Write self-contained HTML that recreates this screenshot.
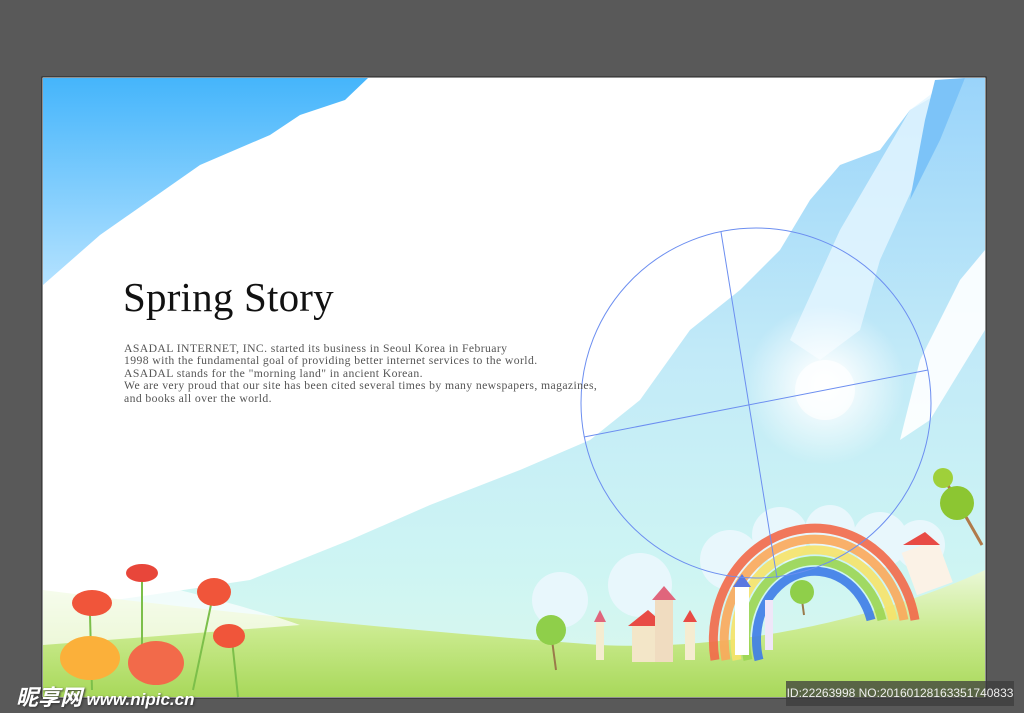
<!DOCTYPE html>
<html><head><meta charset="utf-8"><style>
html,body{margin:0;padding:0;background:#595959;width:1024px;height:713px;overflow:hidden;font-family:"Liberation Serif",serif}
svg{position:absolute;left:0;top:0}
.t{position:absolute;left:123px;top:273px;font-size:41px;color:#111;font-family:"Liberation Serif",serif;letter-spacing:0.2px}
.p{position:absolute;left:124px;top:343px;font-size:11.7px;line-height:12.4px;color:#555;white-space:nowrap;letter-spacing:0.4px}
.wm{position:absolute;left:16px;top:680px;color:#fff;font-family:"Liberation Sans","Noto Sans CJK SC",sans-serif;font-weight:bold;font-style:italic;text-shadow:1px 1px 2px #333}
.id{position:absolute;left:786px;top:681px;width:228px;height:25px;background:rgba(60,60,60,0.75);color:#eee;font-family:"Liberation Sans",sans-serif;font-size:12px;line-height:25px;text-align:center}
</style></head><body>
<svg width="1024" height="713" viewBox="0 0 1024 713">
<defs>
<linearGradient id="tl" x1="0" y1="0" x2="0" y2="1"><stop offset="0" stop-color="#45b5fb"/><stop offset="1" stop-color="#b4e2ff"/></linearGradient>
<linearGradient id="sky" x1="0" y1="0" x2="0" y2="1"><stop offset="0" stop-color="#9ad4fa"/><stop offset="0.45" stop-color="#c2eaf8"/><stop offset="0.8" stop-color="#cef5f3"/><stop offset="1" stop-color="#dcf8ec"/></linearGradient>
<linearGradient id="gr" x1="0" y1="0" x2="0" y2="1"><stop offset="0" stop-color="#eaf8d8"/><stop offset="0.5" stop-color="#c9ea8c"/><stop offset="1" stop-color="#a8d85a"/></linearGradient>
<radialGradient id="sun"><stop offset="0" stop-color="#fff" stop-opacity="1"/><stop offset="0.3" stop-color="#fff" stop-opacity="0.8"/><stop offset="1" stop-color="#fff" stop-opacity="0"/></radialGradient>
</defs>
<rect x="42" y="77" width="944" height="621" fill="#fff" stroke="#222" stroke-width="1"/>
<polygon points="43,78 368,78 345,100 300,115 270,135 200,165 150,200 100,235 43,285" fill="url(#tl)"/>
<polygon points="965,78 985,78 985,697 43,697 43,610 150,595 250,580 350,540 430,505 520,470 590,440 640,400 690,330 740,290 780,250 810,200 840,165 880,150 910,110" fill="url(#sky)"/>
<polygon points="910,110 950,80 965,78 930,150 880,260 860,330 820,360 790,340 840,230" fill="#e6f6ff" opacity="0.8"/>
<polygon points="935,80 965,78 940,140 910,200 925,120" fill="#7cc3f8"/>
<polygon points="985,250 985,330 930,420 900,440 920,360 960,280" fill="#fff" opacity="0.9"/>
<circle cx="825" cy="385" r="80" fill="url(#sun)"/>
<circle cx="825" cy="390" r="30" fill="#fff" opacity="0.7"/>
<g fill="#e8f7fc">
<circle cx="730" cy="560" r="30"/><circle cx="780" cy="535" r="28"/><circle cx="830" cy="530" r="25"/><circle cx="880" cy="540" r="28"/><circle cx="920" cy="545" r="25"/><circle cx="560" cy="600" r="28"/><circle cx="640" cy="585" r="32"/>
</g>
<path d="M43,590 C200,610 400,630 600,645 C750,652 900,610 985,570 L985,697 L43,697 Z" fill="url(#gr)"/>
<path d="M43,560 C120,575 230,600 300,625 L43,645Z" fill="#fff" opacity="0.7"/>
<g fill="none" stroke-width="9" opacity="0.9">
<path d="M715,660 A100,110 0 0 1 915,620" stroke="#f36a4a"/>
<path d="M726,660 A90,100 0 0 1 904,620" stroke="#fba95b"/>
<path d="M737,660 A79,89 0 0 1 893,620" stroke="#f7e46a"/>
<path d="M748,660 A68,78 0 0 1 882,620" stroke="#9cd653"/>
<path d="M759,660 A57,67 0 0 1 871,620" stroke="#3e7de8"/>
</g>
<g>
<rect x="632" y="622" width="30" height="40" fill="#f3e6c8"/><polygon points="628,626 648,610 666,626" fill="#e84b45"/>
<rect x="655" y="598" width="18" height="64" fill="#f0dcc0"/><polygon points="652,600 664,586 676,600" fill="#e0657c"/>
<rect x="685" y="620" width="10" height="40" fill="#f5ecd0"/><polygon points="683,622 690,610 697,622" fill="#e84b45"/>
<rect x="596" y="620" width="8" height="40" fill="#f5ecd0"/><polygon points="594,622 600,610 606,622" fill="#e0657c"/>
<rect x="735" y="585" width="14" height="70" fill="#fff"/><polygon points="733,587 742,574 751,587" fill="#5a78e0"/>
<rect x="765" y="600" width="8" height="50" fill="#f0e6f8"/>
<rect x="908" y="545" width="38" height="45" fill="#fbf2e6" transform="rotate(-20 927 567)"/>
<polygon points="903,545 925,532 940,545" fill="#e84b45"/>
</g>
<g>
<line x1="552" y1="640" x2="556" y2="670" stroke="#9a7a4a" stroke-width="2"/><circle cx="551" cy="630" r="15" fill="#8fcf4a"/>
<line x1="802" y1="600" x2="804" y2="615" stroke="#9a7a4a" stroke-width="2"/><circle cx="802" cy="592" r="12" fill="#8fcf4a"/>
<line x1="945" y1="480" x2="982" y2="545" stroke="#b07a4a" stroke-width="3"/><circle cx="943" cy="478" r="10" fill="#9fd03a"/><circle cx="957" cy="503" r="17" fill="#8cc632"/>
</g>
<g>
<line x1="90" y1="615" x2="92" y2="690" stroke="#7cbf4a" stroke-width="2"/>
<line x1="142" y1="580" x2="142" y2="650" stroke="#7cbf4a" stroke-width="2"/>
<line x1="212" y1="600" x2="193" y2="690" stroke="#7cbf4a" stroke-width="2"/>
<line x1="232" y1="640" x2="238" y2="697" stroke="#7cbf4a" stroke-width="2"/>
<ellipse cx="92" cy="603" rx="20" ry="13" fill="#f0553a"/>
<ellipse cx="142" cy="573" rx="16" ry="9" fill="#e8463a"/>
<ellipse cx="214" cy="592" rx="17" ry="14" fill="#f0553a"/>
<ellipse cx="229" cy="636" rx="16" ry="12" fill="#f0553a"/>
<ellipse cx="90" cy="658" rx="30" ry="22" fill="#fbb03a"/>
<ellipse cx="156" cy="663" rx="28" ry="22" fill="#f26a4a"/>
</g>
<circle cx="756" cy="403" r="175" fill="none" stroke="#6c8ef0" stroke-width="1"/>
<line x1="721" y1="232" x2="777" y2="578" stroke="#6c8ef0" stroke-width="1"/>
<line x1="584" y1="437" x2="928" y2="370" stroke="#6c8ef0" stroke-width="1"/>
</svg>
<div class="t">Spring Story</div>
<div class="p">ASADAL INTERNET, INC. started its business in Seoul Korea in February<br>1998 with the fundamental goal of providing better internet services to the world.<br>ASADAL stands for the "morning land" in ancient Korean.<br>We are very proud that our site has been cited several times by many newspapers, magazines,<br>and books all over the world.</div>
<div class="wm"><span style="font-size:22px">昵享网</span> <span style="font-size:17px">www.nipic.cn</span></div>
<div class="id">ID:22263998 NO:20160128163351740833</div>
</body></html>
